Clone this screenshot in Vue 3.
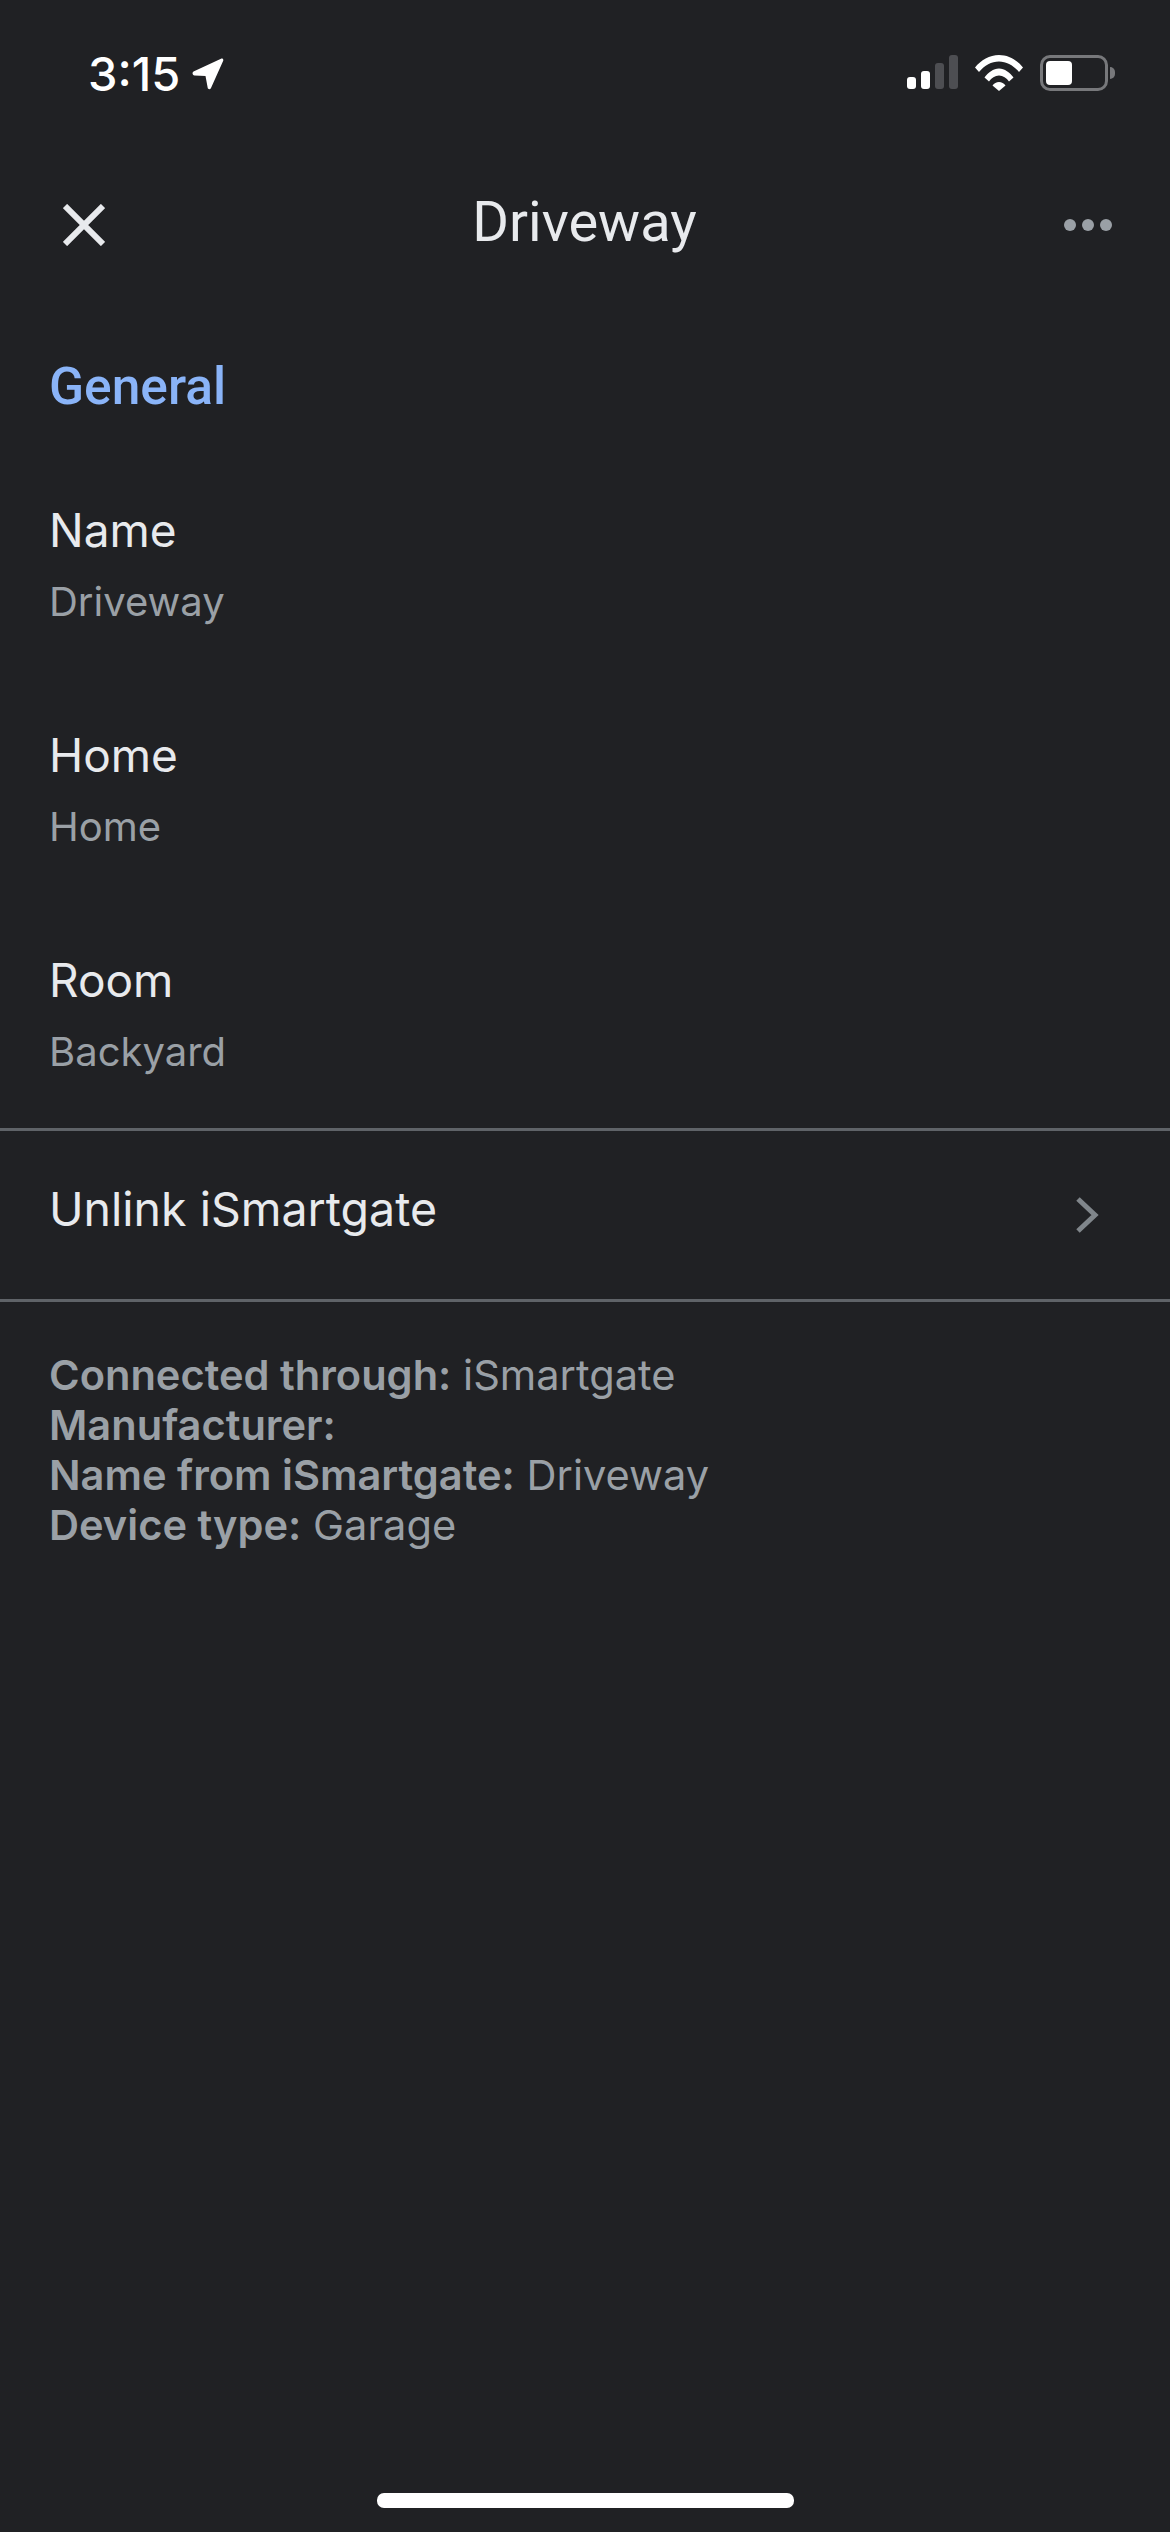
<template>
  <div class="page">
    <div class="status-bar">
      <div class="clock">
        <span class="time">3:15</span>
        <svg class="location" width="32" height="32" viewBox="0 0 32 32">
          <path d="M1.500 13.500 29 .8c1.500-.7 2.800.6 2.200 2L19 30c-.8 1.700-3 1.500-3.300-.3L13.500 18 2.500 17.500c-2-.1-2.700-3-1-4z" fill="#fff" />
        </svg>
      </div>
      <div class="indicators">
        <svg width="51" height="34" viewBox="0 0 51 34">
          <rect x="0" y="22" width="9" height="12" rx="3" fill="#fff" />
          <rect x="14" y="16" width="9" height="18" rx="3" fill="#fff" />
          <rect x="28" y="8" width="9" height="26" rx="3" fill="#4d4e52" />
          <rect x="42" y="0" width="9" height="34" rx="3" fill="#4d4e52" />
        </svg>
        <svg width="48" height="36" viewBox="0 0 48 36">
          <path d="M0 12.500C6 5 14.500 0 24 0s18 5 24 12.500L44 17C38.500 10.500 31.500 6.500 24 6.500S9.500 10.500 4 17z" fill="#fff" />
          <path d="M9.500 22.500C13 17.500 18.500 13.500 24 13.500s11 4 14.500 9L34 26.500C31.500 23 28 20.500 24 20.500S16.500 23 14 26.500z" fill="#fff" />
          <path d="M17.500 30.500c1.500-2.200 4-3.500 6.500-3.500s5 1.300 6.500 3.500L24 36z" fill="#fff" />
        </svg>
        <div class="battery">
          <div class="battery-body"><div class="battery-fill"></div></div>
          <div class="battery-cap"></div>
        </div>
      </div>
    </div>

    <header class="nav">
      <svg class="close" width="42" height="42" viewBox="0 0 42 42">
        <path d="M2 2 40 40M40 2 2 40" stroke="#e8eaed" stroke-width="6" fill="none" />
      </svg>
      <h1 class="title">Driveway</h1>
      <div class="more"><span></span><span></span><span></span></div>
    </header>

    <h2 class="section">General</h2>

    <div v-for="item in fields" :key="item.label" class="field">
      <div class="label">{{ item.label }}</div>
      <div class="value">{{ item.value }}</div>
    </div>

    <div class="unlink">
      <span class="unlink-text">Unlink iSmartgate</span>
      <svg width="24" height="36" viewBox="0 0 24 36">
        <path d="M3 2 20 18 3 34" stroke="#80868b" stroke-width="5" fill="none" />
      </svg>
    </div>

    <div class="info">
      <div v-for="line in info" :key="line.key"><b>{{ line.key }}:</b> {{ line.text }}</div>
    </div>

    <div class="home-indicator"></div>
  </div>
</template>

<script setup>
const fields = [
  { label: 'Name', value: 'Driveway' },
  { label: 'Home', value: 'Home' },
  { label: 'Room', value: 'Backyard' }
]

const info = [
  { key: 'Connected through', text: 'iSmartgate' },
  { key: 'Manufacturer', text: '' },
  { key: 'Name from iSmartgate', text: 'Driveway' },
  { key: 'Device type', text: 'Garage' }
]
</script>

<style>
html, body {
  background: #202124;
}
</style>

<style scoped>
.page {
  width: 1170px;
  height: 2532px;
  background: #202124;
  font-family: Inter, Roboto, sans-serif;
  display: flex;
  flex-direction: column;
  overflow: hidden;
}

.status-bar {
  height: 150px;
  box-sizing: border-box;
  padding: 55px 55px 0 88px;
  display: flex;
  justify-content: space-between;
  align-items: flex-start;
}

.clock {
  display: flex;
  align-items: center;
  gap: 12px;
  height: 37px;
}

.time {
  font-size: 47px;
  font-weight: 500;
  line-height: 37px;
  color: #fff;
}

.indicators {
  display: flex;
  align-items: flex-start;
  gap: 17px;
}

.battery {
  display: flex;
  align-items: center;
  gap: 2px;
  height: 36px;
}

.battery-body {
  width: 68px;
  height: 36px;
  box-sizing: border-box;
  border: 3px solid #77787b;
  border-radius: 10px;
  padding: 3px;
}

.battery-fill {
  width: 26px;
  height: 24px;
  background: #fff;
  border-radius: 4px;
}

.battery-cap {
  width: 5px;
  height: 12px;
  background: #77787b;
  border-radius: 0 6px 6px 0;
}

.nav {
  height: 150px;
  box-sizing: border-box;
  padding: 0 58px 0 63px;
  display: flex;
  align-items: flex-start;
  justify-content: space-between;
}

.close {
  margin-top: 54px;
}

.title {
  margin: 36px 0 0;
  font-family: Roboto, sans-serif;
  font-size: 56px;
  font-weight: 400;
  line-height: 72px;
  color: #e8eaed;
}

.more {
  display: flex;
  gap: 6px;
  margin-top: 69px;
}

.more span {
  width: 12px;
  height: 12px;
  border-radius: 50%;
  background: #9aa0a6;
}

.section {
  margin: 57px 0 83px;
  padding-left: 49px;
  font-family: Roboto, sans-serif;
  font-size: 51.5px;
  font-weight: 500;
  line-height: 60px;
  color: #8ab4f8;
}

.field {
  height: 225px;
  padding-left: 49px;
  flex-shrink: 0;
}

.label {
  font-size: 46px;
  line-height: 60px;
  color: #e8eaed;
}

.value {
  font-size: 40px;
  line-height: 56px;
  margin-top: 14px;
  color: #9aa0a6;
}

.unlink {
  box-sizing: border-box;
  border-top: 3px solid #5f6368;
  border-bottom: 3px solid #5f6368;
  height: 174px;
  margin-top: -47px;
  padding: 0 71px 0 49px;
  flex-shrink: 0;
  display: flex;
  align-items: center;
  justify-content: space-between;
  font-size: 46.5px;
  color: #e8eaed;
}

.unlink-text {
  margin-bottom: 12px;
}

.info {
  padding: 48px 49px 0;
  font-size: 41.6px;
  line-height: 50px;
  color: #9aa0a6;
}

.info b {
  font-weight: 600;
}

.home-indicator {
  width: 417px;
  height: 15px;
  border-radius: 7px;
  background: #fff;
  margin: auto auto 24px;
}
</style>
